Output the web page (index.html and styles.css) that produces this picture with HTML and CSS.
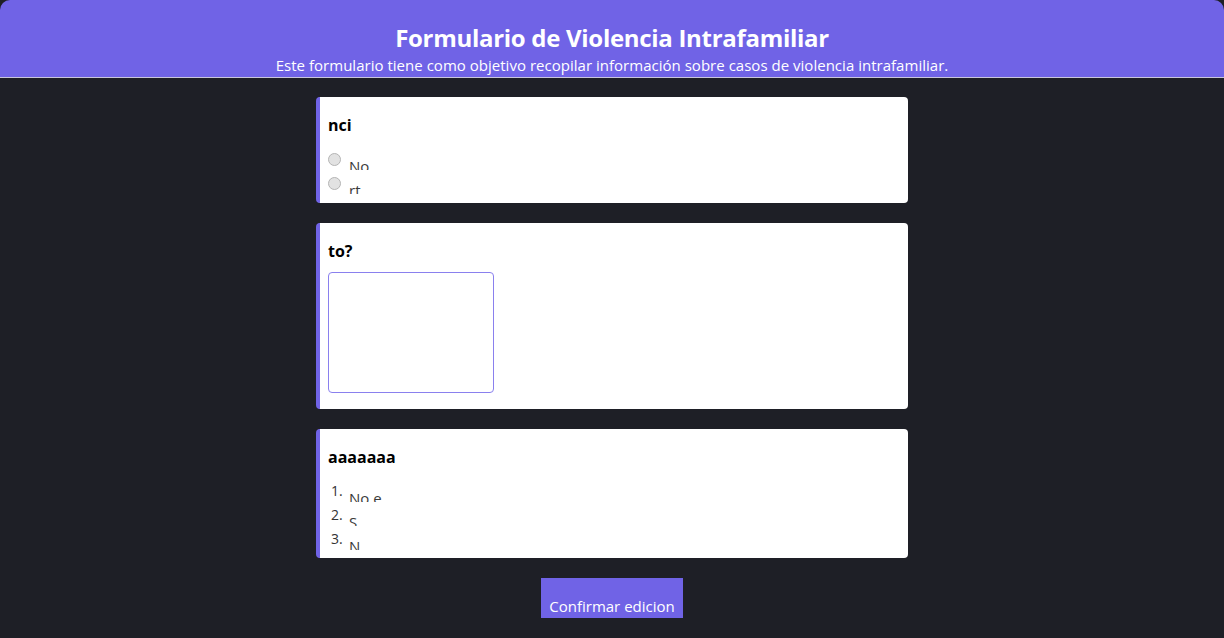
FILE: index.html
```html
<!DOCTYPE html>
<html lang="es">
<head>
<meta charset="utf-8">
<title>Formulario de Violencia Intrafamiliar</title>
<link rel="stylesheet" href="styles.css">
</head>
<body>
<header class="header">
  <h1 class="title">Formulario de Violencia Intrafamiliar</h1>
  <p class="subtitle">Este formulario tiene como objetivo recopilar información sobre casos de violencia intrafamiliar.</p>
</header>
<main class="main">
  <section class="card">
    <h2 class="question">nci</h2>
    <div class="options">
      <label class="option"><input class="radio" type="radio" name="q1" disabled><span class="opt-text">No</span></label>
      <label class="option"><input class="radio" type="radio" name="q1" disabled><span class="opt-text">rt</span></label>
    </div>
  </section>
  <section class="card">
    <h2 class="question">to?</h2>
    <textarea class="answer"></textarea>
  </section>
  <section class="card card-list">
    <h2 class="question">aaaaaaa</h2>
    <ol class="olist">
      <li class="oitem"><span class="num">1.</span><span class="opt-text">No e</span></li>
      <li class="oitem"><span class="num">2.</span><span class="opt-text">S</span></li>
      <li class="oitem"><span class="num">3.</span><span class="opt-text">N</span></li>
    </ol>
  </section>
  <button class="confirm" type="button">Confirmar edicion</button>
</main>
</body>
</html>
```

FILE: styles.css
```css
html, body {
  margin: 0;
  padding: 0;
}
body {
  background: #1e1f26;
  font-family: "Open Sans", "Noto Sans", sans-serif;
  height: 638px;
  overflow: hidden;
}
.header {
  background: #7063e6;
  border-radius: 10px 10px 0 0;
  border-bottom: 1px solid #c9c6dc;
  height: 78px;
  box-sizing: border-box;
  padding-top: 23px;
  display: flex;
  flex-direction: column;
  align-items: center;
  color: #fff;
}
.title {
  margin: 0;
  font-size: 24px;
  line-height: 30px;
  font-weight: 700;
  font-stretch: 95%;
  letter-spacing: -0.3px;
}
.subtitle {
  margin: 3px 0 0 0;
  font-size: 15px;
  line-height: 19px;
  letter-spacing: 0.02px;
}
.main {
  display: flex;
  flex-direction: column;
  align-items: center;
  gap: 20px;
  padding-top: 19px;
}
.card {
  width: 592px;
  box-sizing: border-box;
  background: #fff;
  border-left: 4px solid #7063e6;
  border-radius: 4px;
  padding: 17px 8px 9px 8px;
}
.card-list {
  padding-bottom: 8px;
}
.question {
  margin: 0 0 10px 0;
  font-size: 16px;
  line-height: 22px;
  font-weight: 700;
  color: #000;
}
.options {
  display: flex;
  flex-direction: column;
}
.option {
  display: flex;
  align-items: flex-start;
  height: 24px;
  overflow: hidden;
}
.radio {
  appearance: none;
  -webkit-appearance: none;
  width: 13px;
  height: 13px;
  margin: 7px 8px 0 0;
  border: 1px solid #b4b4b4;
  background: #e2e2e2;
  border-radius: 50%;
  box-sizing: border-box;
  flex: none;
}
.opt-text {
  display: block;
  padding-top: 10px;
  font-size: 15px;
  line-height: 20px;
  color: #3a3a3a;
}
.answer {
  display: block;
  width: 166px;
  height: 121px;
  box-sizing: border-box;
  margin: 2px 0 7px 0;
  border: 1px solid #8a80ee;
  border-radius: 4px;
  resize: none;
  outline: none;
}
.olist {
  list-style: none;
  margin: 0;
  padding: 0;
  display: flex;
  flex-direction: column;
}
.oitem {
  display: flex;
  align-items: flex-start;
  height: 24px;
  overflow: hidden;
}
.num {
  width: 21px;
  box-sizing: border-box;
  padding-left: 3px;
  padding-top: 3px;
  font-size: 14px;
  line-height: 19px;
  color: #333;
  flex: none;
}
.confirm {
  background: #7063e6;
  color: #fff;
  border: none;
  border-radius: 0;
  font-family: "Open Sans", "Noto Sans", sans-serif;
  font-size: 15px;
  line-height: 20px;
  padding: 18px 8px 2px 8px;
  height: 40px;
  cursor: pointer;
}
```
